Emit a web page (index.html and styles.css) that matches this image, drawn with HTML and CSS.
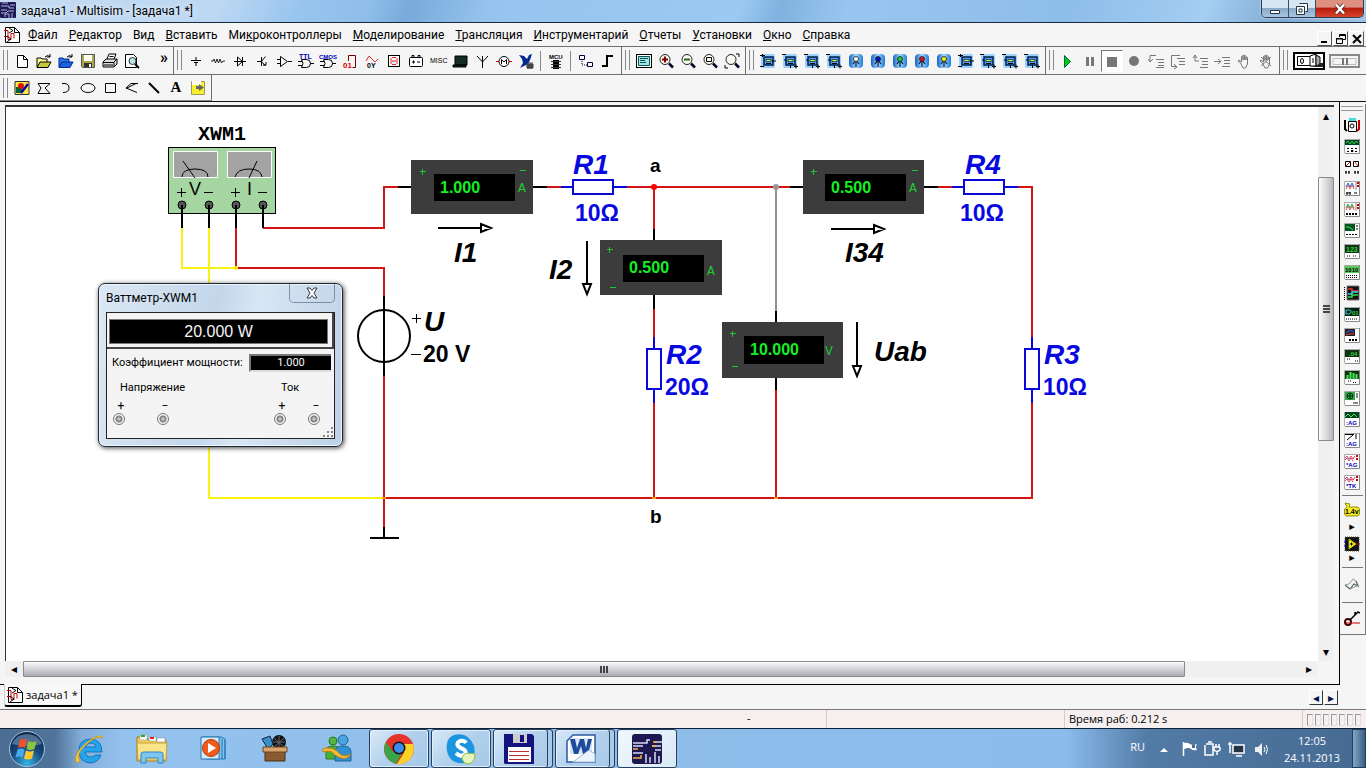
FILE: index.html
```html
<!DOCTYPE html>
<html lang="ru">
<head>
<meta charset="utf-8">
<title>задача1 - Multisim - [задача1 *]</title>
<link rel="stylesheet" href="styles.css">
</head>
<body>
<svg class="paints" aria-hidden="true">
  <defs>
    <linearGradient id="g-probe" x1="0" y1="0" x2="1" y2="0"><stop offset="0" stop-color="#0f62c8"/><stop offset=".5" stop-color="#a9d8fa"/><stop offset="1" stop-color="#1b7ad8"/></linearGradient>
    <radialGradient id="g-orb" cx=".5" cy=".9" r=".9"><stop offset="0" stop-color="#35b5e8"/><stop offset=".5" stop-color="#174a7c"/><stop offset="1" stop-color="#0b2346"/></radialGradient>
  </defs>
</svg>
<svg class="sprite" aria-hidden="true">
  <symbol id="chip" viewBox="0 0 16 16"><rect width="16" height="16" rx="1" fill="#1c1a50"/><path d="M1 4h8v2h5M1 8h6M1 11h5l2-2h6M5 15v-3h4v4M12 11v5M10 3h5M2 1h6" fill="none" stroke="#aeb4e8" stroke-width="1"/></symbol>
  <symbol id="sheet" viewBox="0 0 16 16"><path d="M1.500.5h9l5 5v10h-14z" fill="#fff" stroke="#000"/><path d="M10.500.5v5h5" fill="none" stroke="#000"/><path d="M0 3.500h4v9h3v-6h3v5M0 9.500h4" fill="none" stroke="#c00000"/><path d="M5 1l4 2.500-4 2.500M3 9l4 3-4 3" fill="none" stroke="#000"/></symbol>
  <symbol id="new" viewBox="0 0 16 16"><path d="M3.500 2.500h6l4 4v8h-10zM9.500 2.500v4h4" fill="#fff" stroke="#000"/></symbol>
  <symbol id="open" viewBox="0 0 16 16"><path d="M1 14V5h4l1 1h5v3" fill="#ffff9a" stroke="#000"/><path d="M1 14.500L4 9h11l-3 5.500z" fill="#c9c93c" stroke="#000"/><path d="M9 4q3-3 5 0m0-3v3h-3" fill="none" stroke="#000"/></symbol>
  <symbol id="openb" viewBox="0 0 16 16"><path d="M1 14V5h4l1 1h5v3" fill="#2b72e8" stroke="#002a90"/><path d="M1 14.500L4 9h11l-3 5.500z" fill="#1a63de" stroke="#002a90"/><path d="M9 4q3-3 5 0m0-3v3h-3" fill="none" stroke="#000"/></symbol>
  <symbol id="save" viewBox="0 0 16 16"><path d="M1.500 1.500h13v13h-12l-1-1z" fill="#aaa84a" stroke="#555"/><path d="M4 2h8v6H4z" fill="#fff"/><path d="M4 10h8v4H4z" fill="#333"/><path d="M9 11h2v3H9z" fill="#fff"/></symbol>
  <symbol id="print" viewBox="0 0 16 16"><path d="M5 6l2-5h7l-2 5" fill="#fff" stroke="#000"/><path d="M1 9l3-3h11v5l-3 3H1z" fill="#ddd" stroke="#000"/><path d="M7.500 3.500h4M1 9.500h11v4M12 9l3-3M2 12h9" fill="none" stroke="#000"/></symbol>
  <symbol id="preview" viewBox="0 0 16 16"><path d="M1.500 1.500h8l3 3v10h-11z" fill="#fff" stroke="#000"/><circle cx="8.500" cy="8" r="3.500" fill="#b7e3ea" stroke="#333"/><path d="M11 11l4 4" stroke="#000" stroke-width="2"/></symbol>
  <symbol id="src" viewBox="0 0 16 16"><path d="M8 4v3M3 7.500h10M6 9.500h4M8 10v3" fill="none" stroke="#000"/></symbol>
  <symbol id="res" viewBox="0 0 16 16"><path d="M1 8l2 0 1-2 1.500 4L7 6l1.500 4L10 6l1.500 4L13 8h2" fill="none" stroke="#222"/></symbol>
  <symbol id="diode" viewBox="0 0 16 16"><path d="M2 8.500h12M5.500 4v9l5-4.500zM10.500 4v9" fill="none" stroke="#000"/></symbol>
  <symbol id="bjt" viewBox="0 0 16 16"><path d="M3 8.500h4M7.500 4v9M11.500 3.500l-4 5 4 4.500M9 12h3v-3" fill="none" stroke="#000"/></symbol>
  <symbol id="amp" viewBox="0 0 16 16"><path d="M4.500 3.500v10l7-5zM1 6.500h3M1 10.500h3M12 8.500h4" fill="none" stroke="#000"/></symbol>
  <symbol id="gate" viewBox="0 0 16 16"><path d="M3.500 6.500h5a4 4 0 010 8h-5q3-4 0-8zM0 8.500h4M0 12.500h4M12 10.500h4" fill="none" stroke="#000"/></symbol>
  <symbol id="misc1" viewBox="0 0 16 16"><path d="M6.500 8V2.500h7v12h-3" fill="none" stroke="#700"/><text x="1" y="15" class="ic red">01</text></symbol>
  <symbol id="misc2" viewBox="0 0 16 16"><path d="M2 8l3-5 3 3 3 3 3-3" fill="none" stroke="#d33"/><text x="3" y="15" class="ic">0Y</text></symbol>
  <symbol id="disp" viewBox="0 0 16 16"><rect x="2.500" y="2.500" width="11" height="11" fill="#fff" stroke="#000"/><path d="M6 4.500h4M6 8h4M6 11.500h4M5 5v6M11 5v6" stroke="#d22" fill="none"/></symbol>
  <symbol id="power" viewBox="0 0 16 16"><rect x="1.500" y="4.500" width="13" height="9" rx="1" fill="#fff" stroke="#000"/><path d="M4 4V2.500h2V4M10 4V2.500h2V4M4 9h3M5.500 7.500v3M9 9h3" fill="none" stroke="#000"/></symbol>
  <symbol id="pc" viewBox="0 0 16 16"><path d="M3 3h12v9H3zM1 12h13v2H1z" fill="#142c26" stroke="#000"/></symbol>
  <symbol id="ant" viewBox="0 0 16 16"><path d="M8.500 15V3M3 3l5.500 6L14 3" fill="none" stroke="#000"/></symbol>
  <symbol id="motor" viewBox="0 0 16 16"><path d="M0 8.500h3M13 8.500h3" stroke="#d00"/><circle cx="8" cy="8.500" r="5" fill="#fff" stroke="#000"/><path d="M5.500 11V6.500L8 9l2.500-2.500V11" fill="none" stroke="#000"/></symbol>
  <symbol id="ni" viewBox="0 0 16 16"><path d="M1 2l5 1 3 3 2-4 3-1-2 6-2 4-8 4 3-5-1-4z" fill="#002a90"/><path d="M9 11h6v4H9zM10 9v7M12 9v7M14 9v7" stroke="#444" fill="#444"/></symbol>
  <symbol id="mcu" viewBox="0 0 16 16"><path d="M5 7h6v9H5z"/><path d="M3 8.500h10M3 11.500h10M3 14.500h10" stroke="#333"/></symbol>
  <symbol id="hier" viewBox="0 0 16 16"><path d="M1.500 2.500h5v4h-5zM9.500 9.500h5v4h-5z" fill="#fff" stroke="#004"/><path d="M4 8v4h5" fill="none" stroke="#000" stroke-dasharray="1 1"/></symbol>
  <symbol id="bus" viewBox="0 0 16 16"><path d="M2 13h5V3h6" fill="none" stroke="#000" stroke-width="2"/></symbol>
  <symbol id="full" viewBox="0 0 16 16"><rect x=".5" y="1.500" width="15" height="13" fill="#fff" stroke="#000"/><path d="M2.500 3.500h11v9h-11z" fill="#a5e4e4" stroke="#055"/><path d="M4 5.500h8M4 7.500h5M4 9.500h6" stroke="#055"/></symbol>
  <symbol id="lens" viewBox="0 0 16 16"><circle cx="7" cy="6.500" r="5" fill="#fafaf0" stroke="#222"/><path d="M11 10.500l4 4" stroke="#002" stroke-width="2.500"/></symbol>
  <symbol id="zin" viewBox="0 0 16 16"><use href="#lens"/><path d="M4 6.500h6M7 3.500v6" stroke="#800000" stroke-width="2"/></symbol>
  <symbol id="zout" viewBox="0 0 16 16"><use href="#lens"/><path d="M4 6.500h6" stroke="#262" stroke-width="2"/></symbol>
  <symbol id="zarea" viewBox="0 0 16 16"><use href="#lens"/><path d="M4.500 4.500h5v4h-5z" fill="none" stroke="#000"/></symbol>
  <symbol id="zfit" viewBox="0 0 16 16"><use href="#lens"/><path d="M12 1h3v3M1 12v3h3" fill="none" stroke="#000"/></symbol>
  <symbol id="meas" viewBox="0 0 16 16"><rect x="1" y="1" width="14" height="14" rx="2" fill="#9cd0fa"/><rect x="4" y="4" width="9" height="8" fill="#4aa0ee" stroke="#001c50" stroke-width="1.500"/><path d="M6 6.500h5v2H6z" fill="#dff26a" stroke="#000" stroke-width=".6"/><path d="M0 2.500h5M2.500 1v3M0 13.500h4M12 8h4M6 10.500h5" stroke="#000"/></symbol>
  <symbol id="meas2" viewBox="0 0 16 16"><rect x="1" y="1" width="14" height="14" rx="2" fill="#9cd0fa"/><rect x="4" y="4" width="9" height="8" fill="#4aa0ee" stroke="#001c50" stroke-width="1.500"/><path d="M6 6.500h5v2H6z" fill="#dff26a" stroke="#000" stroke-width=".6"/><path d="M0 1.500h4M8.500 12v3M12 13.500h4M14 11.500v4M6 10.500h5M2 7h2" stroke="#000"/></symbol>
  <symbol id="probe" viewBox="0 0 16 16"><rect x="1" y="1" width="14" height="14" rx="4" fill="url(#g-probe)"/><path d="M8 7v7M5 11l3-4 3 4" fill="none" stroke="#001a40" stroke-width="1.200"/><circle cx="8" cy="6" r="2.500" fill="currentColor" stroke="#122" stroke-width=".8"/></symbol>
  <symbol id="play" viewBox="0 0 16 16"><path d="M4.500 2.500v12l6-6z" fill="#0c1" stroke="#064"/></symbol>
  <symbol id="pause" viewBox="0 0 16 16"><path d="M4 4h3v9H4zM9 4h3v9H9z" fill="#777"/></symbol>
  <symbol id="stop" viewBox="0 0 16 16"><path d="M3 4h10v10H3z" fill="#777"/></symbol>
  <symbol id="rec" viewBox="0 0 16 16"><circle cx="8" cy="8" r="5" fill="#777"/></symbol>
  <symbol id="step1" viewBox="0 0 16 16"><path d="M2 8V2.500h6M0 6l2 3 3-3M8 6.500h8M10 9.500h6M10 12.500h6M8 14.500h8" fill="none" stroke="#777"/></symbol>
  <symbol id="step2" viewBox="0 0 16 16"><path d="M10 2.500H1.500v11H6M4 11l3 3-3 2M7 5.500h8M9 8.500h6M9 11.500h6" fill="none" stroke="#777"/></symbol>
  <symbol id="step3" viewBox="0 0 16 16"><path d="M3 2v6h4M1 5l2-3 2 3M8 5.500h8M10 8.500h6M10 11.500h6M8 14.500h8" fill="none" stroke="#777"/></symbol>
  <symbol id="step4" viewBox="0 0 16 16"><path d="M0 8.500h6M4 6l3 2.500L4 11M8 4.500h8M10 7.500h6M10 10.500h6M8 13.500h8" fill="none" stroke="#777"/></symbol>
  <symbol id="hand" viewBox="0 0 16 16"><path d="M4.500 10L2 8l1-1 2.500 2V3.500q1-1 1.500 0V7 2.500q1-1 1.500 0V7 3q1-1 1.500 0v4-2.500q1-1 1.500 0V11l-2 4H7z" fill="none" stroke="#777"/></symbol>
  <symbol id="hand2" viewBox="0 0 16 16"><use href="#hand"/><path d="M3 4l10 9M13 4L3 13" stroke="#777"/></symbol>
  <symbol id="pic" viewBox="0 0 16 16"><path d="M1 1.500h14v13H1z" fill="#ffe640" stroke="#333"/><path d="M2 7h6v6H2z" fill="#063"/><circle cx="7" cy="6" r="3" fill="#d10"/><path d="M7 13l7-9" stroke="#00a" stroke-width="2.500"/></symbol>
  <symbol id="poly" viewBox="0 0 16 16"><path d="M2 3.500h12L9 8l5 5.500H2L5 8z" fill="none" stroke="#000"/></symbol>
  <symbol id="arc" viewBox="0 0 16 16"><path d="M4 3.500h2q5 0 5 4.500t-6 4.500" fill="none" stroke="#000"/></symbol>
  <symbol id="ell" viewBox="0 0 16 16"><ellipse cx="8" cy="8" rx="7" ry="4.500" fill="none" stroke="#000"/></symbol>
  <symbol id="rect" viewBox="0 0 16 16"><path d="M3.500 3.500h10v9h-10z" fill="none" stroke="#000"/></symbol>
  <symbol id="mline" viewBox="0 0 16 16"><path d="M14 3.500H7L2 8l11 4.500M2 8.500l10-5" fill="none" stroke="#000"/></symbol>
  <symbol id="line" viewBox="0 0 16 16"><path d="M3 3l10 10" stroke="#000" stroke-width="2"/></symbol>
  <symbol id="note" viewBox="0 0 16 16"><path d="M1.500 1.500h13v13h-13z" fill="#f8f02c" stroke="#996"/><path d="M2 1h9v4H2z" fill="#fff"/><path d="M6 6h3V4l5 3.500L9 11V9H6z" fill="#666"/></symbol>

  <symbol id="n-meter" viewBox="0 0 16 16"><path d="M1 3v9l2 2" stroke="#000" stroke-width="2" fill="none"/><path d="M15 3v9l-2 2" stroke="#c00" stroke-width="2" fill="none"/><path d="M4.500 4.500h8v10h-8z" fill="#fff" stroke="#000"/><path d="M5 1h7v3H5z" fill="#4dd"/><circle cx="8" cy="9" r="2" fill="#fff" stroke="#000"/></symbol>
  <symbol id="n-base" viewBox="0 0 16 16"><path d="M1 1h14v14H1z" fill="#fff"/><path d="M.5 15V1.500h15" fill="none" stroke="#aaa"/><path d="M15.500 1v14.500H1" fill="none" stroke="#888"/></symbol>
  <symbol id="n-gen" viewBox="0 0 16 16"><use href="#n-base"/><path d="M1 2h14v5H1z" fill="#042"/><path d="M2 5l2-2 2 3 2-3 2 3 2-3 2 2" fill="none" stroke="#3c4"/><path d="M3 10.500h2M7 10.500h2M11 10.500h2M3 13.500h2M7 12.500h2v1h-2M11 13.500h2" stroke="#000"/></symbol>
  <symbol id="n-watt" viewBox="0 0 16 16"><path d="M1.500 2.500h5v5h-5zM9.500 2.500h5v5h-5z" fill="#fff" stroke="#000"/><path d="M2 7l4-4M11 3l3 4" stroke="#c22"/><path d="M1 13h2M4 13h2M10 13h2M13 13h2M2 12v3M5 12v3M11 12v3M14 12v3" stroke="#000"/></symbol>
  <symbol id="n-osc" viewBox="0 0 16 16"><use href="#n-base"/><path d="M2 7l2-4 2 4 2-4 2 4" fill="none" stroke="#26c"/><path d="M2 9l2-4 2 4 2-4 2 4" fill="none" stroke="#d55"/><path d="M12 2v8" stroke="#888"/><path d="M13 3h2M13 6h2" stroke="#c00" stroke-width="2"/><path d="M2 13h5M3 12v3M6 12v3M10 13h3" stroke="#000"/></symbol>
  <symbol id="n-osc4" viewBox="0 0 16 16"><use href="#n-base"/><path d="M2 7l2-4 2 4 2-4 2 4" fill="none" stroke="#2a4"/><path d="M2 9l2-4 2 4 2-4 2 4" fill="none" stroke="#d55"/><path d="M12 2v8" stroke="#888"/><path d="M13 4h2M13 7h2" stroke="#c00" stroke-width="2"/><path d="M2 13h12" stroke="#000" stroke-width="2" stroke-dasharray="2 1"/></symbol>
  <symbol id="n-bode" viewBox="0 0 16 16"><use href="#n-base"/><path d="M1 2h10v7H1z" fill="#052"/><path d="M2 5h3l4 3" fill="none" stroke="#4e5"/><path d="M13 3v6M2 12.500h12" stroke="#000" stroke-dasharray="2 1"/></symbol>
  <symbol id="n-num" viewBox="0 0 16 16"><use href="#n-base"/><path d="M1 2h14v8H1z" fill="#131"/><text x="2" y="9" class="ic grn">123</text><path d="M3 13h3M9 13h3" stroke="#000" stroke-dasharray="1 1"/></symbol>
  <symbol id="n-word" viewBox="0 0 16 16"><use href="#n-base"/><path d="M1 2h14v7H1z" fill="#5c5"/><text x="1" y="8" class="ic sm">1010</text><path d="M2 11.500h12M2 13.500h12" stroke="#000" stroke-dasharray="1 1"/></symbol>
  <symbol id="n-logic" viewBox="0 0 16 16"><path d="M3 1h12v14H3z" fill="#111" stroke="#777"/><path d="M4 4h4v2h6" fill="none" stroke="#e33" stroke-width="1.500"/><path d="M4 9h4V7h6" fill="none" stroke="#3de" stroke-width="1.500"/><path d="M4 12h4v-2h6" fill="none" stroke="#3d4" stroke-width="1.500"/><path d="M.5 2v13" stroke="#000" stroke-dasharray="1 1"/></symbol>
  <symbol id="n-conv" viewBox="0 0 16 16"><use href="#n-base"/><path d="M1 2h14v8H1z" fill="#021"/><path d="M2 4h4q3 2-1 4H2z" fill="none" stroke="#4cc"/><text x="8" y="9" class="ic sm grn">01</text><path d="M2 13h12" stroke="#000" stroke-dasharray="1 1"/></symbol>
  <symbol id="n-iv" viewBox="0 0 16 16"><use href="#n-base"/><path d="M1 2h10v7H1z" fill="#222"/><path d="M2 6q4-4 8-1" fill="none" stroke="#36f"/><path d="M2 8q4-2 8-1" fill="none" stroke="#e44"/><path d="M5 13h9" stroke="#000" stroke-width="2" stroke-dasharray="2 1"/></symbol>
  <symbol id="n-dist" viewBox="0 0 16 16"><use href="#n-base"/><path d="M1 2h14v7H1z" fill="#131"/><text x="5" y="8" class="ic sm grn">.04</text><path d="M3 11h4M11 13h3" stroke="#000" stroke-dasharray="1 1"/></symbol>
  <symbol id="n-spec" viewBox="0 0 16 16"><use href="#n-base"/><path d="M1 2h14v8H1z" fill="#131"/><path d="M3.500 10V6M6.500 10V3M9.500 10V4M12.500 10V5" stroke="#4e5" stroke-width="2"/><path d="M4 12h3M9 13.500h4" stroke="#000" stroke-dasharray="1 1"/></symbol>
  <symbol id="n-net" viewBox="0 0 16 16"><use href="#n-base"/><path d="M1 2h10v8H1z" fill="#3a4"/><circle cx="6" cy="6" r="3" fill="none" stroke="#031"/><path d="M3 6h6M6 3v6M13 3v5M9 13h5" stroke="#021"/></symbol>
  <symbol id="n-ag1" viewBox="0 0 16 16"><use href="#n-base"/><path d="M1 1h14v6H1z" fill="#042"/><path d="M1 6l3-3 3 3 3-3 3 3" fill="none" stroke="#4e5"/><text x="2" y="14" class="ic sm blu">:AG</text></symbol>
  <symbol id="n-ag2" viewBox="0 0 16 16"><use href="#n-base"/><path d="M1 2.500h9M3 8l6-5M12 2v5" stroke="#000" fill="none"/><text x="2" y="14" class="ic sm blu">:AG</text></symbol>
  <symbol id="n-ag3" viewBox="0 0 16 16"><use href="#n-base"/><path d="M1 5l2-2 2 3 2-3 2 3 2-3M1 7l2-2 2 3 2-3 2 3" stroke="#c46" fill="none"/><path d="M13 2v6" stroke="#c00" stroke-width="2" stroke-dasharray="2 1"/><text x="2" y="14" class="ic sm blu">*AG</text></symbol>
  <symbol id="n-tk" viewBox="0 0 16 16"><use href="#n-base"/><path d="M1 5l2-2 2 3 2-3 2 3 2-3M1 7l2-2 2 3 2-3 2 3" stroke="#c46" fill="none"/><path d="M13 2v6" stroke="#c00" stroke-width="2" stroke-dasharray="2 1"/><text x="2" y="14" class="ic sm blu">*TK</text></symbol>
  <symbol id="n-probe" viewBox="0 0 16 16"><path d="M1 1l5 1-1 3h9l1.500 2v5L14 14H2L.5 12V7L3 5z" fill="#f6ec20" stroke="#770" stroke-width=".8"/><text x="1" y="12" class="ic">1.4v</text></symbol>
  <symbol id="n-lab" viewBox="0 0 16 16"><rect x="1" y="1" width="14" height="14" fill="#111" stroke="#555" stroke-dasharray="1 1"/><path d="M5 3v10l7-5z" fill="#ff3" stroke="#aa0"/><path d="M6 8h3M7.500 6.500v3" stroke="#000"/><path d="M0 6h3M0 10h3" stroke="#00c"/><path d="M12 8h4" stroke="#c00"/></symbol>
  <symbol id="n-eye" viewBox="0 0 16 16"><path d="M1 9l5 4 4-5 4 2-2-5" fill="none" stroke="#466" stroke-width="1.200"/><path d="M1 9l4-1 4-5 3 2M6 13l9-4" fill="none" stroke="#999"/></symbol>
  <symbol id="n-clamp" viewBox="0 0 16 16"><circle cx="4" cy="11" r="3" fill="none" stroke="#400" stroke-width="2"/><path d="M6 9l5-5V1l1 2 2-2 2 1" fill="none" stroke="#000" stroke-width="1.500"/><path d="M2 12h14" stroke="#c00"/></symbol>
</svg>

<header class="titlebar">
  <svg class="ico"><use href="#chip"/></svg>
  <h1 class="caption">задача1 - Multisim - [задача1 *]</h1>
  <div class="winbtns">
    <button class="wb" aria-label="Свернуть"><svg width="12" height="12"><path d="M1.500 7.500h9v3h-9z" fill="#fff" stroke="#234"/></svg></button>
    <button class="wb" aria-label="Восстановить"><svg width="12" height="12"><path d="M3.500.5h8v8h-2M.5 3.500h8v8h-8zM3 6h3v3H3z" fill="#fff" stroke="#234"/></svg></button>
    <button class="wb close" aria-label="Закрыть"><svg width="12" height="12"><path d="M2 1.500l8 9M10 1.500l-8 9" stroke="#422" stroke-width="4"/><path d="M2 1.500l8 9M10 1.500l-8 9" stroke="#fff" stroke-width="2.500"/></svg></button>
  </div>
</header>

<nav class="menubar" aria-label="Меню">
  <svg class="ico"><use href="#sheet"/></svg>
  <ul class="menu">
    <li><a href="#"><u>Ф</u>айл</a></li>
    <li><a href="#"><u>Р</u>едактор</a></li>
    <li><a href="#">Ви<u>д</u></a></li>
    <li><a href="#"><u>В</u>ставить</a></li>
    <li><a href="#">Ми<u>к</u>роконтроллеры</a></li>
    <li><a href="#"><u>М</u>оделирование</a></li>
    <li><a href="#"><u>Т</u>рансляция</a></li>
    <li><a href="#"><u>И</u>нструментарий</a></li>
    <li><a href="#"><u>О</u>тчеты</a></li>
    <li><a href="#"><u>У</u>становки</a></li>
    <li><a href="#"><u>О</u>кно</a></li>
    <li><a href="#"><u>С</u>правка</a></li>
  </ul>
  <div class="mdi">
    <button aria-label="Свернуть документ"><svg width="10" height="10"><path d="M1 8h6" stroke="#000" stroke-width="2"/></svg></button>
    <button aria-label="Восстановить документ"><svg width="10" height="10"><path d="M3.500 3V.5h6v5H7M.5 4.500h6v5h-6zM3 1.500h7M0 5h7" fill="none" stroke="#000"/></svg></button>
    <button aria-label="Закрыть документ"><svg width="10" height="10"><path d="M1 1l8 8M9 1L1 9" stroke="#000" stroke-width="2"/></svg></button>
  </div>
</nav>

<div class="toolrow">
  <div class="group file">
    <button aria-label="Новый"><svg><use href="#new"/></svg></button>
    <button aria-label="Открыть"><svg><use href="#open"/></svg></button>
    <button aria-label="Открыть пример"><svg><use href="#openb"/></svg></button>
    <button aria-label="Сохранить"><svg><use href="#save"/></svg></button>
    <button aria-label="Печать"><svg><use href="#print"/></svg></button>
    <button aria-label="Просмотр"><svg><use href="#preview"/></svg></button>
    <button class="more" aria-label="Ещё">»</button>
  </div>
  <div class="group">
    <button aria-label="Источники"><svg><use href="#src"/></svg></button>
    <button aria-label="Пассивные"><svg><use href="#res"/></svg></button>
    <button aria-label="Диоды"><svg><use href="#diode"/></svg></button>
    <button aria-label="Транзисторы"><svg><use href="#bjt"/></svg></button>
    <button aria-label="Аналоговые"><svg><use href="#amp"/></svg></button>
    <button aria-label="TTL"><svg><use href="#gate"/><text x="1" y="6" class="ic blu">TTL</text></svg></button>
    <button aria-label="CMOS"><svg><use href="#gate"/><text x="-1" y="6" class="ic blu sm">CMOS</text></svg></button>
    <button aria-label="Цифровые"><svg><use href="#misc1"/></svg></button>
    <button aria-label="Смешанные"><svg><use href="#misc2"/></svg></button>
    <button aria-label="Индикаторы"><svg><use href="#disp"/></svg></button>
    <button aria-label="Питание"><svg><use href="#power"/></svg></button>
    <button aria-label="Разное"><svg><text x="0" y="10" class="ic thin">MISC</text></svg></button>
    <button aria-label="Периферия"><svg><use href="#pc"/></svg></button>
    <button aria-label="Радиочастотные"><svg><use href="#ant"/></svg></button>
    <button aria-label="Электромеханика"><svg><use href="#motor"/></svg></button>
    <button aria-label="Компоненты NI"><svg><use href="#ni"/></svg></button>
    <span class="sep"></span>
    <button aria-label="Микроконтроллер"><svg><use href="#mcu"/><text x="1" y="6" class="ic sm">MCU</text></svg></button>
    <span class="sep"></span>
    <button aria-label="Иерархический блок"><svg><use href="#hier"/></svg></button>
    <button aria-label="Шина"><svg><use href="#bus"/></svg></button>
  </div>
  <div class="group">
    <button aria-label="Полный экран"><svg><use href="#full"/></svg></button>
    <button aria-label="Увеличить"><svg><use href="#zin"/></svg></button>
    <button aria-label="Уменьшить"><svg><use href="#zout"/></svg></button>
    <button aria-label="Область"><svg><use href="#zarea"/></svg></button>
    <button aria-label="По размеру"><svg><use href="#zfit"/></svg></button>
  </div>
  <div class="group">
    <button aria-label="Амперметр"><svg><use href="#meas"/></svg></button>
    <button aria-label="Амперметр повёрнутый"><svg><use href="#meas2"/></svg></button>
    <button aria-label="Амперметр вертикальный"><svg><use href="#meas2"/></svg></button>
    <button aria-label="Амперметр вертикальный обратный"><svg><use href="#meas2"/></svg></button>
    <button class="c-white" aria-label="Пробник"><svg><use href="#probe"/></svg></button>
    <button class="c-blue" aria-label="Пробник синий"><svg><use href="#probe"/></svg></button>
    <button class="c-green" aria-label="Пробник зелёный"><svg><use href="#probe"/></svg></button>
    <button class="c-red" aria-label="Пробник красный"><svg><use href="#probe"/></svg></button>
    <button class="c-yellow" aria-label="Пробник жёлтый"><svg><use href="#probe"/></svg></button>
    <button aria-label="Вольтметр"><svg><use href="#meas"/></svg></button>
    <button aria-label="Вольтметр повёрнутый"><svg><use href="#meas2"/></svg></button>
    <button aria-label="Вольтметр вертикальный"><svg><use href="#meas2"/></svg></button>
    <button aria-label="Вольтметр вертикальный обратный"><svg><use href="#meas2"/></svg></button>
  </div>
  <div class="group">
    <button aria-label="Пуск"><svg><use href="#play"/></svg></button>
    <button aria-label="Пауза"><svg><use href="#pause"/></svg></button>
    <button class="pressed" aria-label="Стоп"><svg><use href="#stop"/></svg></button>
    <button aria-label="Запись"><svg><use href="#rec"/></svg></button>
    <button aria-label="Шаг внутрь"><svg><use href="#step1"/></svg></button>
    <button aria-label="Шаг через"><svg><use href="#step2"/></svg></button>
    <button aria-label="Шаг наружу"><svg><use href="#step3"/></svg></button>
    <button aria-label="До курсора"><svg><use href="#step4"/></svg></button>
    <button aria-label="Точка останова"><svg><use href="#hand"/></svg></button>
    <button aria-label="Удалить точки"><svg><use href="#hand2"/></svg></button>
  </div>
  <div class="group last">
    <button class="wide" aria-label="Выключатель"><svg width="32" height="18"><path d="M1 1h30v16H1z" fill="#fff" stroke="#000" stroke-width="2"/><path d="M4.500 4.500h13v9h-13z" fill="#fff" stroke="#000"/><ellipse cx="9" cy="9" rx="1.500" ry="2.500" fill="none" stroke="#000"/><path d="M17 4l6-2v12h-6z" fill="#fff" stroke="#000"/><path d="M20 6v5" stroke="#000"/><path d="M23 3l4 2v9h-4z" fill="#aaa" stroke="#000"/><path d="M27 11h3v4H16l7-1z" fill="#222"/></svg></button>
    <button class="wide" aria-label="Приостановить"><svg width="32" height="18"><path d="M1 3h29v12H1z" fill="#f5f5f5" stroke="#888" stroke-width="2"/><path d="M4 6.500h23v6H4z" fill="none" stroke="#bbb"/><path d="M14 6v7M18 6v7" stroke="#777" stroke-width="2"/></svg></button>
  </div>
</div>

<div class="toolrow second">
  <div class="group">
    <button aria-label="Рисунок"><svg><use href="#pic"/></svg></button>
    <button aria-label="Многоугольник"><svg><use href="#poly"/></svg></button>
    <button aria-label="Дуга"><svg><use href="#arc"/></svg></button>
    <button aria-label="Эллипс"><svg><use href="#ell"/></svg></button>
    <button aria-label="Прямоугольник"><svg><use href="#rect"/></svg></button>
    <button aria-label="Ломаная"><svg><use href="#mline"/></svg></button>
    <button aria-label="Линия"><svg><use href="#line"/></svg></button>
    <button class="letter" aria-label="Текст">A</button>
    <button aria-label="Комментарий"><svg><use href="#note"/></svg></button>
  </div>
</div>

<main class="main">
  <section class="work">
    <div class="sheet">
      <div class="canvas">
        <svg class="schematic" width="1312" height="554" viewBox="6 107 1312 554" role="img" aria-label="Схема">
          <g><rect x="168.500" y="147.500" width="107" height="66" fill="#a5d6a2" stroke="#000"/><path d="M173.500 151.500h44v26h-44zM227.500 151.500h44v26h-44z" fill="#a3a3a3" stroke="#fff"/><path d="M182 177q0-8 13-8t13 8M183 161l12 17M235 177q2-8 14-8t13 8M257 161l-8 17M177 192.500h9M181.500 188v9M204 192.500h9M231 192.500h9M235.500 188v9M258 192.500h9" fill="none" stroke="#000"/></g>
          <text x="189" y="195" class="vi">V</text><text x="247" y="195" class="vi">I</text>
          <g fill="#555" stroke="#000"><circle cx="182" cy="205" r="4"/><circle cx="209" cy="205" r="4"/><circle cx="236" cy="205" r="4"/><circle cx="263" cy="205" r="4"/></g>
          <g class="wire">
            <path class="r" d="M236 228v40h148v28M263 228h121v-41h14M384 376v151M384 498h648v-95M1032 337V187h-14M547 187h14M627 187h163M654 187v42M654 309v28M654 403v95M776 390v108M938 187h14"/>
            <path class="y" d="M182 228v40h54M209 228v270h175"/>
            <path class="g" d="M776 187v124"/>
            <path class="k" d="M182 205v23M209 205v23M236 205v23M263 205v23M384 296v80M384 527v11M370 538h29M398 187h13M533 187h14M654 229v11M654 295v14M776 311v11M776 378v12M790 187h13M924 187h14"/>
            <path class="b" d="M561 187h12M613 187h14M573 180h40v14h-40zM952 187h12M1004 187h14M964 180h40v14h-40zM654 337v12M654 389v14M647 349h14v40h-14zM1032 337v12M1032 389v14M1025 349h14v40h-14z"/>
            <circle class="k" cx="384" cy="336" r="26"/>
            <path class="k" d="M438 228h43M481 224v8l10-4zM831 229h43M874 225v8l10-4zM587 241v43M583 284h8l-4 10zM857 322v44M853 366h8l-4 10z"/>
          </g>
          <path d="M412 318.500h9M416.500 314v9M411 354.500h10" stroke="#000"/>
          <circle cx="654" cy="187" r="3" fill="#f00"/><circle cx="776" cy="187" r="3" fill="#999"/><circle cx="236" cy="268" r="2" fill="#fe0"/><path d="M652 497h4v2h-4zM774 497h4v2h-4zM382 497h4v2h-4z" fill="#f90"/>
          <g fill="#3c3c3c"><path d="M411 160h122v54H411zM803 160h121v54H803zM600 240h122v55H600zM722 322h121v56H722z"/></g>
          <path d="M434 174h81v27h-81zM825 174h81v27h-81zM623 255h81v27h-81zM744 336h80v28h-80z"/>
          <path d="M420 171.500h6M422.500 169v6M520 170.500h6M811 171.500h6M813.500 169v6M912 170.500h6M607 249.500h6M609.500 247v6M610 287.500h6M730 333.500h6M732.500 331v6M732 366.500h6" stroke="#1fc832"/>
          <g class="lcd"><text x="440" y="193">1.000</text><text x="831" y="193">0.500</text><text x="629" y="273">0.500</text><text x="750" y="355">10.000</text></g>
          <g class="unit"><text x="518" y="192">A</text><text x="909" y="192">A</text><text x="707" y="275">A</text><text x="825" y="355">V</text></g>
          <text x="198" y="140" class="xwm">XWM1</text>
          <g class="name"><text x="454" y="262">I1</text><text x="549" y="279">I2</text><text x="845" y="262">I34</text><text x="874" y="361">Uab</text><text x="424" y="331">U</text></g>
          <g class="name blue"><text x="573" y="174">R1</text><text x="965" y="174">R4</text><text x="666" y="364">R2</text><text x="1044" y="364">R3</text></g>
          <g class="val blue"><text x="575" y="221">10Ω</text><text x="960" y="221">10Ω</text><text x="665" y="395">20Ω</text><text x="1043" y="395">10Ω</text></g>
          <text x="423" y="362" class="val">20 V</text>
          <g class="node"><text x="650" y="172">a</text><text x="650" y="523">b</text></g>
        </svg>
        <section class="dialog" aria-label="Ваттметр-XWM1">
          <header class="dlg-head"><h2>Ваттметр-XWM1</h2><button class="dlg-close" aria-label="Закрыть ваттметр"><svg width="12" height="12"><path d="M1 1h3l2 2.500L8 1h3L8 6l3 5H8L6 8.500 4 11H1l3-5z" fill="#fff" stroke="#334"/></svg></button></header>
          <div class="dlg-body">
            <div class="frame"><output class="big">20.000 W</output></div>
            <div class="factor"><span>Коэффициент мощности:</span><output class="small">1.000</output></div>
            <div class="jacks">
              <div class="pair"><span class="pt">Напряжение</span><span>+</span><span>−</span><i class="jack"></i><i class="jack"></i></div>
              <div class="pair cur"><span class="pt">Ток</span><span>+</span><span>−</span><i class="jack"></i><i class="jack"></i></div>
            </div>
            <svg class="grip" width="12" height="12"><path d="M9 1h2v2H9zM5 5h2v2H5zM9 5h2v2H9zM1 9h2v2H1zM5 9h2v2H5zM9 9h2v2H9z" fill="#888"/></svg>
          </div>
        </section>
      </div>
      <div class="vscroll"><span class="arrow">▴</span><i class="v1"></i><i class="thumb v2"></i><i class="v3"></i><span class="arrow">▾</span></div>
      <div class="hscroll"><span class="arrow">◂</span><i class="thumb h1"></i><i class="h2"></i><span class="arrow">▸</span></div>
    </div>
    <div class="tabs">
      <button class="tab"><svg class="ico"><use href="#sheet"/></svg>задача1 *</button>
      <div class="tabnav"><button aria-label="Назад">◂</button><button aria-label="Вперёд">▸</button></div>
    </div>
  </section>
  <aside class="side"><div class="instruments">
    <i class="grab"></i>
    <button aria-label="Мультиметр"><svg><use href="#n-meter"/></svg></button>
    <button aria-label="Генератор"><svg><use href="#n-gen"/></svg></button>
    <button aria-label="Ваттметр"><svg><use href="#n-watt"/></svg></button>
    <button aria-label="Осциллограф"><svg><use href="#n-osc"/></svg></button>
    <button aria-label="Осциллограф 4 канала"><svg><use href="#n-osc4"/></svg></button>
    <button aria-label="Плоттер Боде"><svg><use href="#n-bode"/></svg></button>
    <button aria-label="Частотомер"><svg><use href="#n-num"/></svg></button>
    <button aria-label="Генератор слов"><svg><use href="#n-word"/></svg></button>
    <button aria-label="Логический анализатор"><svg><use href="#n-logic"/></svg></button>
    <button aria-label="Логический преобразователь"><svg><use href="#n-conv"/></svg></button>
    <button aria-label="Характериограф"><svg><use href="#n-iv"/></svg></button>
    <button aria-label="Измеритель искажений"><svg><use href="#n-dist"/></svg></button>
    <button aria-label="Спектроанализатор"><svg><use href="#n-spec"/></svg></button>
    <button aria-label="Анализатор цепей"><svg><use href="#n-net"/></svg></button>
    <button aria-label="Генератор Agilent"><svg><use href="#n-ag1"/></svg></button>
    <button aria-label="Мультиметр Agilent"><svg><use href="#n-ag2"/></svg></button>
    <button aria-label="Осциллограф Agilent"><svg><use href="#n-ag3"/></svg></button>
    <button aria-label="Осциллограф Tektronix"><svg><use href="#n-tk"/></svg></button>
    <hr>
    <button aria-label="Измерительный пробник"><svg><use href="#n-probe"/></svg></button>
    <span class="drop">▸</span>
    <button aria-label="LabVIEW"><svg><use href="#n-lab"/></svg></button>
    <span class="drop">▸</span>
    <hr>
    <button class="tall" aria-label="NI ELVIS"><svg><use href="#n-eye"/></svg></button>
    <hr>
    <button class="tall" aria-label="Токовый пробник"><svg><use href="#n-clamp"/></svg></button>
  </div></aside>
</main>

<footer class="status">
  <span class="s1">-</span><span class="s2"></span><span class="s3">Время раб: 0.212 s</span>
  <span class="leds"><i></i><i></i><i></i><i></i><i></i><i></i><i></i></span>
</footer>

<nav class="taskbar" aria-label="Панель задач">
  <button class="pin orb" aria-label="Пуск Windows"><svg width="38" height="38" viewBox="0 0 38 38"><circle cx="19" cy="19" r="17.500" fill="url(#g-orb)" stroke="#a9c6e0"/><path d="M4 14Q8 4 19 4t15 10q-14 4-30 0z" fill="#9db9d4" opacity=".45"/><path d="M12 10q4-2 7 0l-2 8q-3-2-7 0z" fill="#f0502a"/><path d="M20.500 11q4 2 8 0l-2 8q-4 2-8 0z" fill="#8cc63e"/><path d="M9.500 19.500q4-2 7 0l-2 8q-3-2-7 0z" fill="#4aa8ee"/><path d="M18 20.500q4 2 8 0l-2 8q-4 2-8 0z" fill="#fcc62c"/></svg></button>
  <button class="pin" aria-label="Internet Explorer"><svg width="34" height="34" viewBox="0 0 34 34"><path d="M29 20H12q1 5 6 5 3 0 4-2h6q-3 8-11 8Q6 30 6 18.500T18 7q11 1 11 13zM12 15h11q-1-4-5-4t-6 4z" fill="#25a4ea" stroke="#0b66b4" stroke-width=".8"/><path d="M3 30Q0 22 14 10 28 0 30 6q-6-3-15 5Q2 22 7 29q-2 2-4 1z" fill="#fbc63a" stroke="#c88a10" stroke-width=".6"/></svg></button>
  <button class="pin" aria-label="Проводник"><svg width="34" height="34" viewBox="0 0 34 34"><path d="M2 5h9l2 3h18v21H2z" fill="#f1cf5c" stroke="#a87f1a"/><path d="M5 3h7v5H5zM14 5h7v4h-7zM22 6h8v4h-8z" fill="#fff" stroke="#888" stroke-width=".5"/><path d="M6 3h4v2H6z" fill="#2a2"/><path d="M15 5h4v2h-4z" fill="#d22"/><path d="M2 11h30l-1 17H3z" fill="#fae48a" stroke="#c9a23a"/><path d="M6 31V22q0-2 3-2h16q3 0 3 2v9h-5v-5H11v5z" fill="#7dc6f2" stroke="#2f83c0"/></svg></button>
  <button class="pin" aria-label="Проигрыватель"><svg width="34" height="34" viewBox="0 0 34 34"><path d="M6 5h18l4 2v20H10l-4-2z" fill="#7fc3ee" stroke="#2376ae"/><path d="M4 5h18v22H4z" fill="#d2ebfa" stroke="#2376ae"/><path d="M25 7v20M28 8v19" stroke="#2376ae"/><circle cx="14" cy="16" r="8.500" fill="#f05a1a" stroke="#b93a08"/><path d="M11 11v10l8-5z" fill="#fff"/></svg></button>
  <button class="pin" aria-label="Архив"><svg width="34" height="34" viewBox="0 0 34 34"><circle cx="20" cy="10" r="7" fill="#111"/><path d="M20 4v12M14 10h12M15 6l10 9M25 6L15 15" stroke="#667"/><path d="M3 7l8-3 3 8-5 5z" fill="#3b8fcb" stroke="#124"/><path d="M6 18h20v11H6z" fill="#8a5a30" stroke="#4c2f13"/><path d="M4 15h24v5H4z" fill="#d9a56c" stroke="#6b4520"/></svg></button>
  <button class="pin" aria-label="Messenger"><svg width="34" height="34" viewBox="0 0 34 34"><circle cx="12" cy="9" r="4" fill="#57b545" stroke="#2b7a1f"/><path d="M5 27V19q0-5 7-5t7 5v8z" fill="#4cae38" stroke="#2b7a1f"/><circle cx="22" cy="8" r="5" fill="#4aa5dd" stroke="#1b679d"/><path d="M14 29V20q0-6 8-6t8 6v9z" fill="#2f8fd0" stroke="#1b679d"/><path d="M2 20q-2-4 4-4 8 0 12 5t12 1q-4 6-10 4t-8-5-10-1z" fill="#f6bd3a" stroke="#b98210"/></svg></button>
  <button class="win" aria-label="Chrome"><svg width="32" height="32" viewBox="0 0 32 32"><circle cx="16" cy="16" r="15" fill="#e5352b"/><path d="M3 9a15 15 0 0010 21.700L18.500 21 9 18z" fill="#3aa548"/><path d="M30 11a15 15 0 01-16 20l7-11V11z" fill="#fbd22a"/><circle cx="16" cy="15" r="6.500" fill="#111"/><circle cx="16" cy="15" r="5" fill="#3f8be8"/></svg></button>
  <button class="win" aria-label="Skype"><svg width="32" height="32" viewBox="0 0 32 32"><path d="M9 2q14-4 20 11 3 14-8 17-16 2-19-12Q0 5 9 2z" fill="#1b95e0"/><path d="M21 10q-2-3-6-2-4 2-2 5 2 2 5 3 4 2 2 5-4 4-9-1" fill="none" stroke="#fff" stroke-width="4"/><path d="M17 26q0-8 13-5 0 9-7 10-4 0-6-5z" fill="#e6f4c0" stroke="#8fbf3d"/></svg></button>
  <button class="win stack" aria-label="Сохранение"><svg width="32" height="32" viewBox="0 0 32 32"><path d="M1 1h28l2 2v28H2l-1-1z" fill="#14147e"/><path d="M10 1h14v9H10z" fill="#ccc"/><path d="M17 2h4v7h-4z" fill="#14147e"/><path d="M5 14h23v15H5z" fill="#fff"/><path d="M6 18.500h20M6 22.500h20M6 26.500h20" stroke="#b33"/></svg></button>
  <button class="win stack" aria-label="Word"><svg width="32" height="32" viewBox="0 0 32 32"><path d="M8 2h22v27H2V8z" fill="#fff" stroke="#2a5aa0" stroke-width="1.500"/><path d="M5 5h22v16H5z" fill="#d9e6f6"/><path d="M5 6h5l2 9 3-9h4l2 9 2-9h4l-4 15h-5l-2-8-3 8H9z" fill="#1d4c9c"/><path d="M8 29l16-12 6 4v8z" fill="#edf3fb" stroke="#9db6d8"/></svg></button>
  <button class="win active" aria-label="Multisim"><svg width="32" height="32" viewBox="0 0 32 32"><rect x="1" y="1" width="30" height="30" rx="3" fill="#1d1950"/><path d="M2 10h14v-3h3M2 13h10M2 20h10M23 9h8M21 13h9M24 17h6M15 30v-9M19 30v-6M24 30V19M28 30v-7" fill="none" stroke="#d7d9f7" stroke-width="1.500"/><path d="M2 25h8v-3M22 9h4M2 16h5M21 13h4" fill="none" stroke="#f0b34a" stroke-width="1.500"/></svg></button>
  <div class="tray">
    <span class="lang">RU</span>
    <svg width="110" height="20" viewBox="0 0 110 20"><path d="M1 13h8L5 9z" fill="#fff"/><path d="M24.500 3v14" stroke="#fff" stroke-width="1.500"/><path d="M25 4q3-1 6 1t7 0q-2 3 0 6-4 1-6-1t-7 0z" fill="#fff"/><path d="M33 6h3v3h-3z" fill="#4a6a90"/><path d="M47 5h7v11h-8V6M49 3h4M55 8h6M57 5v3M60 5v3M55 8v3q3 3 6 0V8M58 12v4" fill="none" stroke="#fff" stroke-width="1.500"/><path d="M74 6h11v8H74zM77 17h6M71 3v6M69 5h4M71 9v5" fill="#234" stroke="#fff" stroke-width="1.500"/><path d="M96 8h3l4-4v13l-4-4h-3z" fill="#eee"/><path d="M105 8q2 3 0 5M107 6q3 4 0 9" fill="none" stroke="#fff"/></svg>
    <time class="clock" datetime="2013-11-24T12:05"><span>12:05</span><span>24.11.2013</span></time>
    <button class="peek" aria-label="Показать рабочий стол"></button>
  </div>
</nav>
</body>
</html>
```

FILE: styles.css
```css
* { box-sizing: border-box; }
html, body { height: 100%; margin: 0; }
body {
  display: flex;
  flex-direction: column;
  background: #f5f5f5;
  color: #000;
  font: 12px/16px Roboto, "Open Sans", sans-serif;
  overflow: hidden;
}
h1, h2, ul { margin: 0; padding: 0; font: inherit; list-style: none; }
button { margin: 0; padding: 0; border: 0; background: none; color: inherit; font: inherit; }
svg { display: block; flex: none; }
.paints { position: absolute; width: 0; height: 0; }
.sprite { display: none; }
.ico { width: 16px; height: 16px; }
.ic { font: bold 7px "Liberation Sans", Arial, sans-serif; fill: #000; }
.ic.thin { font-weight: normal; }
.ic.sm { font-size: 6px; }
.ic.red { fill: #e00000; font-size: 8px; }
.ic.blu { fill: #0000c0; }
.ic.grn { fill: #30d040; }

.titlebar {
  display: flex;
  flex: none;
  height: 23px;
  border-bottom: 1px solid #1a2a3c;
  background: linear-gradient(110deg, #c5daf0 0, #bcd8f3 16%, #98c5ee 22%, #8fbeea 27%, #78aada 30%, #96c4ee 36%, #9bc9f2 54%, #80b2df 57%, #98c6f0 62%, #8dbde9 78%, #a4cef2 88%, #7fa8d2 94%, #9fc4e8 100%);
}
.titlebar .ico { margin: 2px 5px 0 0; }
.caption { padding-top: 3px; flex: 1; text-shadow: 0 0 6px #fff; }
.winbtns { display: flex; height: 18px; margin-right: 2px; border: 1px solid #2c3e55; border-top: 0; border-radius: 0 0 5px 5px; overflow: hidden; box-shadow: 0 0 2px #fff; }
.wb { display: grid; place-items: center; width: 27px; border-right: 1px solid #3c5068; background: linear-gradient(#d8e6f4 45%, #8ba9c8 50%, #a9c6e0); }
.wb.close { width: 47px; border: 0; background: linear-gradient(#dd9080 40%, #b71c0c 50%, #d9442c); }

.menubar { display: flex; flex: none; align-items: center; height: 23px; padding: 0 2px 0 4px; }
.menu { display: flex; flex: 1; gap: 11px; padding-left: 8px; }
.menu a { color: inherit; text-decoration: none; }
.mdi { display: flex; gap: 1px; align-self: flex-end; }
.mdi button { display: grid; place-items: center; width: 15px; height: 15px; border: 1px solid; border-color: #fff #555 #555 #fff; }

.toolrow { display: flex; flex: none; height: 28px; border-top: 1px solid #707070; }
.group { display: flex; align-items: center; padding: 0 2px 0 11px; border-right: 1px solid #707070; background: linear-gradient(#888, #888) 3px 3px / 1px 20px no-repeat, linear-gradient(#888, #888) 7px 3px / 1px 20px no-repeat; }
.group button { display: grid; place-items: center; width: 22px; height: 22px; }
.group svg { width: 16px; height: 16px; overflow: visible; }
.group .sep { width: 1px; height: 20px; margin: 0 4px 0 3px; background: #888; }
.file { width: 174px; }
.group .more { width: 14px; margin-left: auto; font-weight: bold; align-items: start; font-size: 16px; }
.group.last { flex: 1; border: 0; padding-right: 0; }
.group .wide { width: 36px; }
.group .wide svg { width: 32px; height: 18px; }
.group .pressed { border: 1px solid; border-color: #777 #fff #fff #777; background: #fff; }
.group .letter { font: bold 15px "Liberation Serif", serif; }
.c-white { color: #fff; }
.c-blue { color: #1010c0; }
.c-green { color: #20d030; }
.c-red { color: #e01020; }
.c-yellow { color: #f4f020; }
.second { height: 28px; border-bottom: 1px solid #111; }
.second .group { border-bottom: 1px solid #888; }

.main { display: flex; flex: 1; min-height: 0; }
.work { display: flex; flex: 1; flex-direction: column; min-width: 0; }
.sheet {
  display: grid;
  flex: 1;
  grid-template: minmax(0, 1fr) 16px / minmax(0, 1fr) 16px;
  min-height: 0;
  padding: 3px 5px 7px;
  border-right: 1px solid #000;
  border-bottom: 1px solid #000;
}
.canvas { position: relative; overflow: hidden; border-top: 2px solid #333; border-left: 1px solid #333; background: #fff; }
.vscroll, .hscroll { display: flex; background: #f0f0f0; }
.vscroll { flex-direction: column; border-top: 2px solid #333; }
.arrow { display: grid; flex: none; place-items: center; width: 18px; height: 16px; font: 12px/12px "DejaVu Sans", sans-serif; }
.vscroll .arrow { width: 16px; height: 18px; }
.thumb { display: grid; place-items: center; border: 1px solid #8a8a8a; border-radius: 1px; }
.thumb::after { content: ""; }
.v1 { flex: 52; }
.v2 { flex: 263; background: linear-gradient(90deg, #fafafa, #dcdce0 50%, #b4b6bc); }
.v2::after { width: 7px; height: 8px; background: repeating-linear-gradient(#444 0 2px, transparent 2px 3px); }
.v3 { flex: 203; }
.h1 { flex: 1160; background: linear-gradient(#fafafa, #dcdce0 40%, #a8abb2); }
.h1::after { width: 8px; height: 7px; background: repeating-linear-gradient(90deg, #444 0 2px, transparent 2px 3px); }
.h2 { flex: 115; }

.schematic { font-family: "Liberation Sans", Arial, sans-serif; font-weight: bold; }
.vi { font-size: 18px; font-weight: normal; }
.wire { fill: none; stroke-width: 2; }
.r { stroke: #d41414; }
.y { stroke: #f8f410; }
.g { stroke: #929292; }
.k { stroke: #000; }
.b { stroke: #0808d8; }
.lcd { font-size: 16px; fill: #14f024; }
.unit { font: 13px "Liberation Mono", monospace; fill: #1fc832; }
.xwm { font: bold 20px "Liberation Mono", monospace; }
.name { font-size: 28px; font-style: italic; }
.val { font-size: 23px; }
.node { font-size: 19px; }
.blue { fill: #0808e0; }

.dialog {
  position: absolute;
  left: 92px;
  top: 176px;
  width: 245px;
  padding: 0 7px 7px;
  border: 1px solid #1c2836;
  border-radius: 7px;
  background: linear-gradient(100deg, #dbe7f4, #c3d6ea 45%, #d8e6f4 60%, #bdd0e5);
  box-shadow: 1px 1px 5px #444, inset 0 0 0 1px #eef5fc;
}
.dlg-head { display: flex; justify-content: space-between; height: 28px; }
.dlg-head h2 { padding-top: 6px; font-size: 12px; }
.dlg-close { display: grid; place-items: center; width: 46px; height: 19px; border: 1px solid #7d90a8; border-top: 0; border-radius: 0 0 5px 5px; }
.dlg-body { position: relative; border: 1px solid #222; background: #f4f4f4; font-size: 11px; }
.frame { padding: 6px 4px 3px 2px; border-right: 2px solid #444; border-bottom: 2px solid #444; background: #f4f4f4; }
.big { display: block; height: 25px; border: 1px solid #777; background: #000; color: #f4f4f4; font: 16px/23px "Liberation Sans", Arial, sans-serif; text-align: center; }
.factor { display: flex; align-items: center; justify-content: space-between; height: 28px; padding: 0 3px 0 5px; }
.small { width: 82px; height: 18px; border: 2px solid #777; border-right: 0; border-bottom-color: #ddd; background: #000; color: #f4f4f4; line-height: 14px; text-align: center; }
.jacks { display: flex; justify-content: space-between; height: 61px; padding: 0 12px 0 4px; }
.pair { display: grid; grid-template-columns: 16px 16px; grid-template-rows: 22px 14px 12px; column-gap: 28px; align-content: start; justify-items: center; align-items: center; }
.pair.cur { column-gap: 18px; }
.pt { grid-column: 1 / -1; justify-self: start; padding-left: 9px; white-space: nowrap; }
.pair span:not(.pt) { font-size: 12px; line-height: 12px; padding-left: 4px; }
.jack { width: 12px; height: 12px; border: 1px solid #777; border-radius: 50%; background: radial-gradient(#ddd 0, #777 3px, #f4f4f4 4px); }
.grip { position: absolute; right: 0; bottom: 0; }

.tabs { display: flex; flex: none; justify-content: space-between; height: 24px; padding: 0 2px 2px 4px; }
.tab { display: flex; gap: 3px; align-items: center; height: 23px; margin-top: -1px; padding: 0 3px 0 2px; border: 1px solid #000; border-top: 0; border-left-color: #ccc; border-bottom-width: 2px; border-radius: 0 0 3px 3px; background: #f8f8f8; font-size: 11px; font-family: "Open Sans", sans-serif; position: relative; }
.tabnav { display: flex; gap: 1px; padding-top: 5px; }
.tabnav button { display: grid; place-items: center; width: 14px; height: 15px; border: 1px solid; border-color: #fff #334 #334 #fff; color: #001050; font: 12px/12px "DejaVu Sans", sans-serif; }

.side { width: 26px; padding-top: 2px; }
.instruments { display: flex; flex-direction: column; align-items: center; padding-right: 1px; border-right: 1px solid #777; border-bottom: 1px solid #777; }
.instruments svg { width: 16px; height: 16px; }
.instruments button { display: grid; place-items: center; width: 22px; height: 21px; }
.instruments .tall { height: 30px; }
.instruments hr { width: 21px; height: 2px; margin: 3px 0 0; border: 0; border-top: 1px solid #777; }
.instruments hr + button:not(.tall) { height: 26px; }
.grab { width: 22px; height: 5px; margin: 2px 0 3px; border: solid #999; border-width: 1px 0; }
.drop { height: 10px; font: 11px/8px "DejaVu Sans", sans-serif; }

.status { display: flex; flex: none; height: 19px; border-top: 1px solid #777; background: #f5efef; font-family: "Open Sans", sans-serif; font-size: 11px; }
.status span { border-right: 1px solid #dcc8c8; }
.s1 { flex: 826; padding-left: 747px; }
.s2 { flex: none; width: 238px; }
.s3 { flex: none; width: 238px; padding: 1px 0 0 4px; }
.status .leds { display: flex; gap: 2px; padding: 4px 5px 0 4px; border: 0; }
.leds i { width: 6px; height: 12px; border: 1px solid #bbb; border-color: #999 #ddd #ddd #999; }

.taskbar {
  display: flex;
  flex: none;
  height: 40px;
  border-top: 1px solid #0c2038;
  background: linear-gradient(90deg, #4b6d92 0, #507399 4%, #83aed9 6%, #93c2ee 9%, #8ebdea 50%, #8bbcec 78%, #527ba6 84%, #466a92 100%);
}
.pin { display: grid; place-items: center; width: 62px; }
.pin.orb { width: 54px; margin-right: 5px; }
.win { display: grid; place-items: center; width: 60px; margin-right: 2px; border: 1px solid #26405e; border-radius: 3px; background: linear-gradient(135deg, #d9e9f8, #b2d0ec 50%, #a5c8e8); box-shadow: inset 0 0 0 1px #e0eefb; }
.stack { padding-right: 8px; box-shadow: inset -4px 0 0 #a9cbea, inset -5px 0 0 #26405e, inset 0 0 0 1px #e0eefb; }
.active { background: linear-gradient(135deg, #f2f8fe, #d8e8f6); }
.tray { display: flex; align-items: center; margin-left: auto; color: #fff; font-family: "Open Sans", sans-serif; font-size: 11px; }
.lang { margin-right: 14px; padding-bottom: 4px; }
.clock { display: grid; width: 66px; margin: 0 7px 0 10px; text-align: center; line-height: 17px; }
.peek { width: 14px; align-self: stretch; border: 1px solid #20405f; background: linear-gradient(90deg, #85a5c5, #395e86); }
```
